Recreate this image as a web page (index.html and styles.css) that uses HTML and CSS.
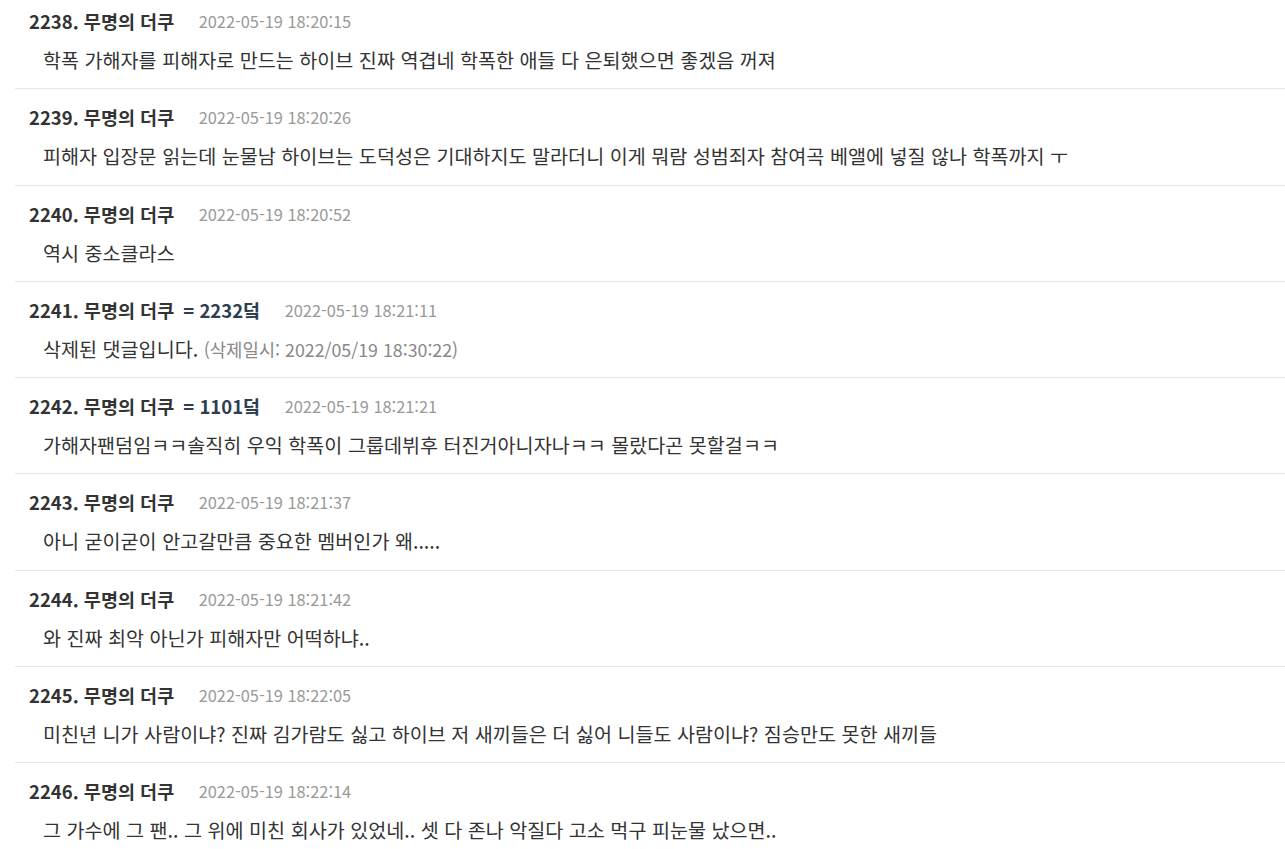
FILE: index.html
```html
<!DOCTYPE html>
<html lang="ko">
<head>
<meta charset="utf-8">
<link rel="stylesheet" href="styles.css">
</head>
<body>
<ul class="comments">
  <li class="comment">
    <div class="meta"><span class="name">2238. 무명의 더쿠</span><span class="date">2022-05-19 18:20:15</span></div>
    <div class="text">학폭 가해자를 피해자로 만드는 하이브 진짜 역겹네 학폭한 애들 다 은퇴했으면 좋겠음 꺼져</div>
  </li>
  <li class="comment">
    <div class="meta"><span class="name">2239. 무명의 더쿠</span><span class="date">2022-05-19 18:20:26</span></div>
    <div class="text">피해자 입장문 읽는데 눈물남 하이브는 도덕성은 기대하지도 말라더니 이게 뭐람 성범죄자 참여곡 베앨에 넣질 않나 학폭까지 ㅜ</div>
  </li>
  <li class="comment">
    <div class="meta"><span class="name">2240. 무명의 더쿠</span><span class="date">2022-05-19 18:20:52</span></div>
    <div class="text">역시 중소클라스</div>
  </li>
  <li class="comment">
    <div class="meta"><span class="name">2241. 무명의 더쿠 <span class="reply">= 2232덬</span></span><span class="date">2022-05-19 18:21:11</span></div>
    <div class="text">삭제된 댓글입니다. <span class="deleted">(삭제일시: 2022/05/19 18:30:22)</span></div>
  </li>
  <li class="comment">
    <div class="meta"><span class="name">2242. 무명의 더쿠 <span class="reply">= 1101덬</span></span><span class="date">2022-05-19 18:21:21</span></div>
    <div class="text">가해자팬덤임ㅋㅋ솔직히 우익 학폭이 그룹데뷔후 터진거아니자나ㅋㅋ 몰랐다곤 못할걸ㅋㅋ</div>
  </li>
  <li class="comment">
    <div class="meta"><span class="name">2243. 무명의 더쿠</span><span class="date">2022-05-19 18:21:37</span></div>
    <div class="text">아니 굳이굳이 안고갈만큼 중요한 멤버인가 왜.....</div>
  </li>
  <li class="comment">
    <div class="meta"><span class="name">2244. 무명의 더쿠</span><span class="date">2022-05-19 18:21:42</span></div>
    <div class="text">와 진짜 최악 아닌가 피해자만 어떡하냐..</div>
  </li>
  <li class="comment">
    <div class="meta"><span class="name">2245. 무명의 더쿠</span><span class="date">2022-05-19 18:22:05</span></div>
    <div class="text">미친년 니가 사람이냐? 진짜 김가람도 싫고 하이브 저 새끼들은 더 싫어 니들도 사람이냐? 짐승만도 못한 새끼들</div>
  </li>
  <li class="comment">
    <div class="meta"><span class="name">2246. 무명의 더쿠</span><span class="date">2022-05-19 18:22:14</span></div>
    <div class="text">그 가수에 그 팬.. 그 위에 미친 회사가 있었네.. 셋 다 존나 악질다 고소 먹구 피눈물 났으면..</div>
  </li>
</ul>
</body>
</html>
```

FILE: styles.css
```css
html, body {
  margin: 0;
  padding: 0;
  background: #fff;
}
body {
  font-family: "Noto Sans CJK KR", "Noto Sans", sans-serif;
  color: #333;
  overflow: hidden;
}
.comments {
  list-style: none;
  margin: -7px 0 0 15px;
  padding: 0;
}
.comment {
  padding: 16px 0 16.3px 14px;
  border-bottom: 1px solid #e6e6e6;
}
.meta {
  display: flex;
  align-items: center;
  gap: 24.5px;
  height: 24px;
  line-height: 24px;
  white-space: nowrap;
}
.name {
  font-size: 18.5px;
  font-weight: 700;
  color: #333;
}
.reply {
  color: #2c3e50;
  margin-left: 4px;
}
.date {
  font-size: 16.4px;
  color: #999;
}
.text {
  margin-top: 15px;
  padding-left: 14px;
  font-size: 19.6px;
  line-height: 24px;
  height: 24px;
  white-space: nowrap;
}
.deleted {
  font-size: 17.8px;
  color: #888;
}
```
